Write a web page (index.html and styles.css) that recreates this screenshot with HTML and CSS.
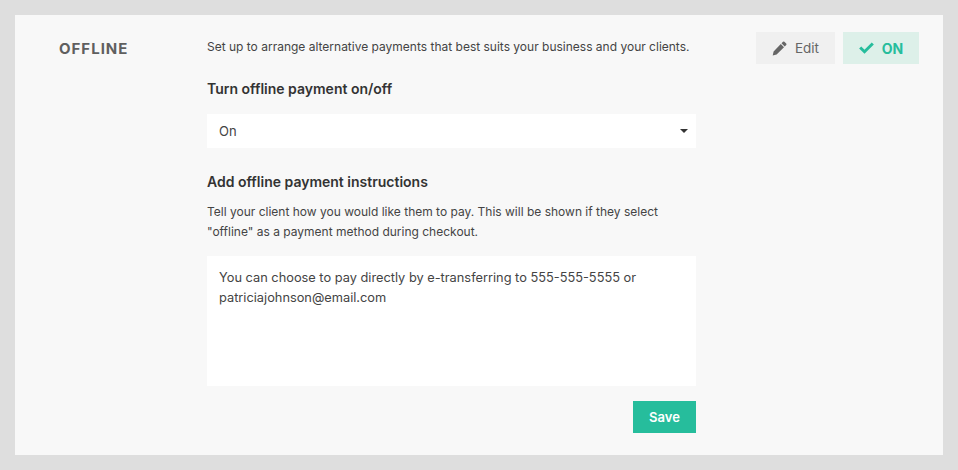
FILE: index.html
```html
<!DOCTYPE html>
<html lang="en">
<head>
  <meta charset="UTF-8">
  <meta name="viewport" content="width=device-width, initial-scale=1.0">
  <title>Offline payment</title>
  <link rel="stylesheet" href="styles.css">
</head>
<body>
  <div class="panel">
    <h2 class="panel-title">OFFLINE</h2>
    <div class="panel-main">
      <p class="intro">Set up to arrange alternative payments that best suits your business and your clients.</p>
      <h3 class="label label-first">Turn offline payment on/off</h3>
      <div class="select">
        <span>On</span>
        <svg class="caret" width="8" height="4" viewBox="0 0 8 4"><path d="M0 0h8L4 4z" fill="#333"/></svg>
      </div>
      <h3 class="label label-second">Add offline payment instructions</h3>
      <p class="help">Tell your client how you would like them to pay. This will be shown if they select "offline" as a payment method during checkout.</p>
      <div class="textarea">You can choose to pay directly by e-transferring to 555-555-5555 or patriciajohnson@email.com</div>
      <div class="form-actions">
        <button class="btn-save">Save</button>
      </div>
    </div>
    <div class="panel-actions">
      <button class="btn btn-edit">
        <svg width="15" height="15" viewBox="0 0 15 15"><path d="M11 .8a1 1 0 0 1 1.4 0l1.8 1.8a1 1 0 0 1 0 1.4l-1.5 1.5-3.2-3.2zM8.8 3 12 6.2l-7.4 7.4-3.9.9.9-3.9z" fill="#666"/></svg>
        Edit
      </button>
      <button class="btn btn-on">
        <svg width="15" height="12" viewBox="0 0 15 12"><path d="M1.2 5.5l4.3 4.2 8.3-8.2" fill="none" stroke="#26bd9c" stroke-width="3"/></svg>
        ON
      </button>
    </div>
  </div>
</body>
</html>
```

FILE: styles.css
```css
* {
  box-sizing: border-box;
}

body {
  margin: 0;
  padding: 15px;
  height: 470px;
  background-color: #dedede;
  color: #444;
  font-family: "Inter", sans-serif;
  font-size: 12px;
}

.panel {
  display: flex;
  height: 440px;
  padding: 17px 24px 0 44px;
  background-color: #f8f8f8;
}

.panel-title {
  width: 148px;
  margin: 7px 0 0;
  font-size: 15px;
  font-weight: 700;
  letter-spacing: 1px;
  color: #5f5f5f;
}

.panel-main {
  width: 489px;
}

.intro {
  margin: 7px 0 0;
  line-height: 16px;
}

.label {
  margin: 0;
  font-size: 14px;
  font-weight: 600;
  line-height: 18px;
  color: #333;
}

.label-first {
  margin-top: 25px;
}

.label-second {
  margin-top: 25px;
}

.select {
  display: flex;
  align-items: center;
  justify-content: space-between;
  height: 34px;
  margin-top: 16px;
  padding: 0 8px 0 12px;
  background-color: #fff;
  font-size: 13px;
}

.help {
  margin: 11px 0 0;
  line-height: 20px;
}

.textarea {
  height: 130px;
  margin-top: 14px;
  padding: 12px;
  background-color: #fff;
  font-size: 12.8px;
  line-height: 20px;
}

.form-actions {
  display: flex;
  justify-content: flex-end;
  margin-top: 15px;
}

.btn-save {
  width: 63px;
  height: 32px;
  border: none;
  background-color: #26bd9c;
  color: white;
  font-family: "Inter", sans-serif;
  font-size: 13px;
  font-weight: 600;
}

.panel-actions {
  display: flex;
  gap: 8px;
  margin-left: 60px;
}

.btn {
  display: flex;
  align-items: center;
  justify-content: center;
  gap: 8px;
  height: 32px;
  border: none;
  font-family: "Inter", sans-serif;
  font-size: 13.5px;
}

.btn-edit {
  width: 79px;
  background-color: #f0f0f0;
  color: #666;
}

.btn-on {
  width: 76px;
  background-color: #ddf0e9;
  color: #26bd9c;
  font-size: 14px;
  font-weight: 700;
}
```
